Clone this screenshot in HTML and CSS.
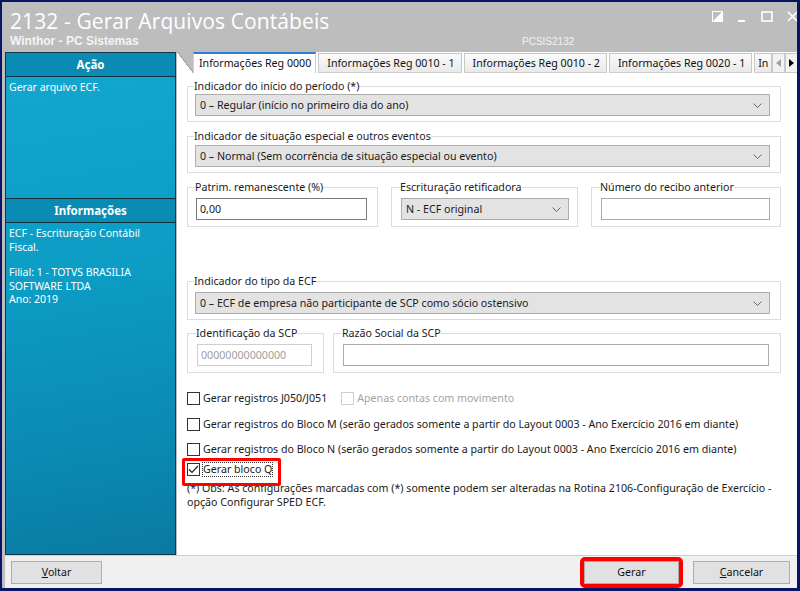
FILE: index.html
```html
<!DOCTYPE html>
<html lang="pt">
<head>
<meta charset="utf-8">
<title>2132 - Gerar Arquivos Contábeis</title>
<link rel="stylesheet" href="styles.css">
</head>
<body>
<div class="window">
  <header class="titlebar">
    <div class="titles">
      <div class="title">2132 - Gerar Arquivos Contábeis</div>
      <div class="subtitle">Winthor - PC Sistemas</div>
    </div>
    <div class="code">PCSIS2132</div>
    <div class="controls">
      <svg class="ctl" width="11" height="11" viewBox="0 0 11 11"><rect x="0.5" y="0.5" width="10" height="10" fill="none" stroke="#fff"/><polygon points="1,10 10,1 10,10" fill="#fff"/></svg>
      <svg class="ctl" width="10" height="11" viewBox="0 0 10 11"><rect x="1" y="9" width="7" height="2" fill="#fff"/></svg>
      <svg class="ctl" width="12" height="11" viewBox="0 0 12 11"><rect x="1" y="1" width="10" height="9" fill="none" stroke="#fff" stroke-width="1.6"/></svg>
      <svg class="ctl" width="10" height="11" viewBox="0 0 10 11"><path d="M1 1 L10 10 M10 1 L1 10" stroke="#fff" stroke-width="1.6"/></svg>
    </div>
  </header>
  <div class="main">
    <aside class="sidebar">
      <div class="side-head">Ação</div>
      <div class="side-body side-action">Gerar arquivo ECF.</div>
      <div class="side-head">Informações</div>
      <div class="side-body side-info">
        <p>ECF - Escrituração Contábil<br>Fiscal.</p>
        <p>Filial: 1 - TOTVS BRASILIA<br>SOFTWARE LTDA<br>Ano: 2019</p>
      </div>
    </aside>
    <section class="panel">
      <nav class="tabs">
        <div class="tab-slant"></div>
        <div class="tab active">Informações Reg 0000</div>
        <div class="tab">Informações Reg 0010 - 1</div>
        <div class="tab">Informações Reg 0010 - 2</div>
        <div class="tab">Informações Reg 0020 - 1</div>
        <div class="tab tab-cut">In</div>
        <div class="scroll-btns">
          <span class="sbtn"><svg width="5" height="8" viewBox="0 0 5 8"><polygon points="5,0 0,4 5,8" fill="#a0a0a0"/></svg></span>
          <span class="sbtn"><svg width="5" height="8" viewBox="0 0 5 8"><polygon points="0,0 5,4 0,8" fill="#000"/></svg></span>
        </div>
      </nav>
      <div class="content">
        <fieldset class="group g1">
          <legend>Indicador do início do período (*)</legend>
          <div class="select">0 – Regular (início no primeiro dia do ano)<svg class="chev" width="9" height="5" viewBox="0 0 9 5"><path d="M0.5 0.5 L4.5 4.5 L8.5 0.5" fill="none" stroke="#666"/></svg></div>
        </fieldset>
        <fieldset class="group g2">
          <legend>Indicador de situação especial e outros eventos</legend>
          <div class="select">0 – Normal (Sem ocorrência de situação especial ou evento)<svg class="chev" width="9" height="5" viewBox="0 0 9 5"><path d="M0.5 0.5 L4.5 4.5 L8.5 0.5" fill="none" stroke="#666"/></svg></div>
        </fieldset>
        <div class="row r3">
          <fieldset class="group g-patrim">
            <legend>Patrim. remanescente (%)</legend>
            <div class="input strong">0,00</div>
          </fieldset>
          <fieldset class="group g-retif">
            <legend>Escrituração retificadora</legend>
            <div class="select">N - ECF original<svg class="chev" width="9" height="5" viewBox="0 0 9 5"><path d="M0.5 0.5 L4.5 4.5 L8.5 0.5" fill="none" stroke="#666"/></svg></div>
          </fieldset>
          <fieldset class="group g-recibo">
            <legend>Número do recibo anterior</legend>
            <div class="input"></div>
          </fieldset>
        </div>
        <fieldset class="group g-tipo">
          <legend>Indicador do tipo da ECF</legend>
          <div class="select">0 – ECF de empresa não participante de SCP como sócio ostensivo<svg class="chev" width="9" height="5" viewBox="0 0 9 5"><path d="M0.5 0.5 L4.5 4.5 L8.5 0.5" fill="none" stroke="#666"/></svg></div>
        </fieldset>
        <div class="row r5">
          <fieldset class="group g-ident">
            <legend>Identificação da SCP</legend>
            <div class="input disabled">00000000000000</div>
          </fieldset>
          <fieldset class="group g-razao">
            <legend>Razão Social da SCP</legend>
            <div class="input"></div>
          </fieldset>
        </div>
        <div class="checks">
          <div class="check-row c1">
            <label class="check"><span class="box"></span>Gerar registros J050/J051</label>
            <label class="check dim"><span class="box"></span>Apenas contas com movimento</label>
          </div>
          <div class="check-row c2">
            <label class="check"><span class="box"></span>Gerar registros do Bloco M (serão gerados somente a partir do Layout 0003 - Ano Exercício 2016 em diante)</label>
          </div>
          <div class="check-row c3">
            <label class="check"><span class="box"></span>Gerar registros do Bloco N (serão gerados somente a partir do Layout 0003 - Ano Exercício 2016 em diante)</label>
          </div>
          <div class="check-row c4">
            <label class="check highlight"><span class="box"><svg width="11" height="9" viewBox="0 0 11 9"><path d="M1 4.5 L4 7.5 L10 1" fill="none" stroke="#222" stroke-width="1.2"/></svg></span><span class="focus">Gerar bloco Q</span></label>
          </div>
        </div>
        <p class="obs">(*) Obs: As configurações marcadas com (*) somente podem ser alteradas na Rotina 2106-Configuração de Exercício - opção Configurar SPED ECF.</p>
      </div>
    </section>
  </div>
  <footer class="bottombar">
    <button class="btn btn-voltar"><u>V</u>oltar</button>
    <div class="spacer"></div>
    <button class="btn btn-primary">Gerar</button>
    <button class="btn btn-cancel"><u>C</u>ancelar</button>
  </footer>
</div>
</body>
</html>
```
FILE: styles.css
```css
* { box-sizing: border-box; }
html, body { margin: 0; padding: 0; }
body {
  width: 800px;
  height: 591px;
  background: #0a1466;
  font-family: "Noto Sans", "Open Sans", sans-serif;
  font-size: 10.65px;
  color: #1a1a1a;
  overflow: hidden;
}
.window {
  position: relative;
  margin: 2px 3px 3px 2px;
  height: 586px;
  background: #bdbdbd;
  display: flex;
  flex-direction: column;
}
.titlebar {
  height: 50px;
  flex-shrink: 0;
  display: flex;
  padding: 0 0 0 8px;
  position: relative;
  color: #fff;
}
.titles { display: flex; flex-direction: column; }
.title {
  font-family: "Open Sans", sans-serif;
  font-size: 21px;
  line-height: 24px;
  margin-top: 7px;
  letter-spacing: 0.1px;
}
.subtitle {
  font-family: "Liberation Sans", sans-serif;
  font-weight: bold;
  font-size: 12px;
  line-height: 13px;
  margin-top: 2px;
  color: #f4f4f4;
}
.code {
  position: absolute;
  left: 520px;
  top: 34px;
  font-family: "Liberation Sans", sans-serif;
  font-size: 10px;
  color: #f2f2f2;
}
.controls {
  position: absolute;
  right: 0;
  top: 9px;
  display: flex;
  gap: 14px;
  align-items: flex-start;
}
.ctl { display: block; }

.main {
  flex: 1;
  display: flex;
  padding-left: 3px;
  min-height: 0;
}
.sidebar {
  width: 171px;
  flex-shrink: 0;
  display: flex;
  flex-direction: column;
  border: 1px solid #143848;
  background: linear-gradient(170deg, #13a7d0 0%, #0c9cc4 45%, #0a88b2 80%, #0a7aa2 100%);
  color: #fff;
}
.side-head {
  height: 24px;
  line-height: 23px;
  text-align: center;
  font-weight: bold;
  font-size: 11.5px;
  background: #0a8bb3;
  border-bottom: 1px solid #10303c;
}
.side-body {
  padding: 4px 3px;
  font-size: 10.5px;
  line-height: 13.5px;
}
.side-action { height: 122px; border-bottom: 1px solid #10303c; }
.side-info p { margin: 0 0 12px 0; }
.side-info { flex: 1; }

.panel {
  flex: 1;
  min-width: 0;
  background: #fff;
  display: flex;
  flex-direction: column;
  margin-left: 1px;
  overflow: hidden;
}
.tabs {
  height: 21px;
  flex-shrink: 0;
  display: flex;
  background: #fff;
  position: relative;
  align-items: flex-end;
}
.tab-slant {
  width: 16px;
  flex-shrink: 0;
  height: 21px;
  background: linear-gradient(to top right, #fff 49%, #9a9a9a 50%, #bdbdbd 56%);
}
.tab {
  flex-shrink: 0;
  height: 20px;
  line-height: 19px;
  padding: 0 6px 0 8px;
  border: 1px solid #c8c8c8;
  border-bottom: 1px solid #d0d0d0;
  background: linear-gradient(#fbfbfb, #e9e9e9);
  margin-left: 2px;
  white-space: nowrap;
  color: #111;
}
.tab.active {
  height: 21px;
  margin-left: 0;
  padding: 0 4px 0 5px;
  background: #fff;
  border-color: #cfcfcf;
  border-top: 2px solid #2b7fd0;
  border-bottom: none;
  line-height: 18px;
}
.tab-cut { width: 18px; padding: 0 0 0 3px; overflow: hidden; }
.scroll-btns { display: flex; height: 20px; flex-shrink: 0; }
.sbtn {
  width: 13px;
  height: 20px;
  display: flex;
  align-items: center;
  justify-content: center;
  border: 1px solid #c8c8c8;
  background: #f2f2f2;
}
.content {
  flex: 1;
  padding: 7px 16px 0 10px;
  display: flex;
  flex-direction: column;
}
.group {
  margin: 0;
  border: 1px solid #dcdcdc;
  padding: 0 10px 0 7px;
  min-width: 0;
}
.group legend {
  padding: 0;
  margin-left: -1px;
  line-height: 13px;
  height: 13px;
  color: #1a1a1a;
}
.select {
  height: 22px;
  background: #e3e3e3;
  border: 1px solid #adadad;
  display: flex;
  align-items: center;
  padding: 0 4px;
  position: relative;
  white-space: nowrap;
}
.chev { position: absolute; right: 7px; top: 8px; }
.input {
  height: 22px;
  border: 1px solid #a9a9a9;
  background: #fff;
  padding: 0 3px;
  display: flex;
  align-items: center;
}
.input.strong { border-color: #7a7a7a; }
.input.disabled { color: #a0a0a0; border-color: #cfcfcf; }

/* vertical rhythm */
.g1 { height: 42px; }
.g1 .select { margin-top: 1px; }
.g2 { height: 43px; margin-top: 8px; }
.g2 .select { margin-top: 2px; }
.row { display: flex; gap: 13px; flex-shrink: 0; }
.r3 { margin-top: 8px; }
.r3 .group { height: 46px; }
.r3 .input, .r3 .select { margin-top: 4px; }
.g-patrim { width: 191px; padding: 0 10px 0 8px; }
.g-retif { width: 187px; padding: 0 8px 0 9px; }
.g-recibo { flex: 1; padding: 0 10px 0 9px; }
.g-tipo { height: 45px; margin-top: 48px; }
.g-tipo .select { margin-top: 4px; }
.r5 { margin-top: 7px; gap: 9px; }
.r5 .group { height: 46px; }
.r5 .input { margin-top: 4px; }
.g-ident { width: 137px; padding: 0 11px 0 9px; }
.g-razao { flex: 1; padding: 0 11px 0 9px; }

.checks { margin-top: 16px; display: flex; flex-direction: column; }
.check-row { display: flex; gap: 14px; height: 18px; align-items: center; flex-shrink: 0; }
.c2 { margin-top: 8px; }
.c3 { margin-top: 7px; }
.c4 { margin-top: 2px; }
.check { display: flex; align-items: center; gap: 3px; white-space: nowrap; position: relative; height: 18px; }
.box {
  width: 13px;
  height: 13px;
  border: 1px solid #333;
  background: #fff;
  display: flex;
  align-items: center;
  justify-content: center;
}
.dim { color: #a3a3a3; }
.dim .box { border-color: #cfcfcf; }
.highlight::before {
  content: "";
  position: absolute;
  left: -5px;
  top: -2px;
  width: 93px;
  height: 22px;
  border: 3px solid #ff0000;
  border-radius: 2px;
}
.focus { outline: 1px dotted #333; outline-offset: 0; line-height: 13px; }
.obs { margin: 3px 0 0 0; line-height: 14px; width: 595px; }

.bottombar {
  height: 33px;
  flex-shrink: 0;
  background: #f0f0f0;
  border-top: 1px solid #cfcfcf;
  margin-left: 3px;
  display: flex;
  align-items: center;
  padding: 0 7px 0 6px;
}
.spacer { flex: 1; }
.btn {
  height: 23px;
  background: #e1e1e1;
  border: 1px solid #adadad;
  font-family: "Noto Sans", sans-serif;
  font-size: 10.65px;
  color: #111;
  padding: 0;
}
.btn-voltar { width: 91px; }
.btn-primary {
  width: 95px;
  outline: 4px solid #ff0000;
  outline-offset: 0;
  border-radius: 1px;
}
.btn-cancel { width: 97px; margin-left: 14px; }
```
